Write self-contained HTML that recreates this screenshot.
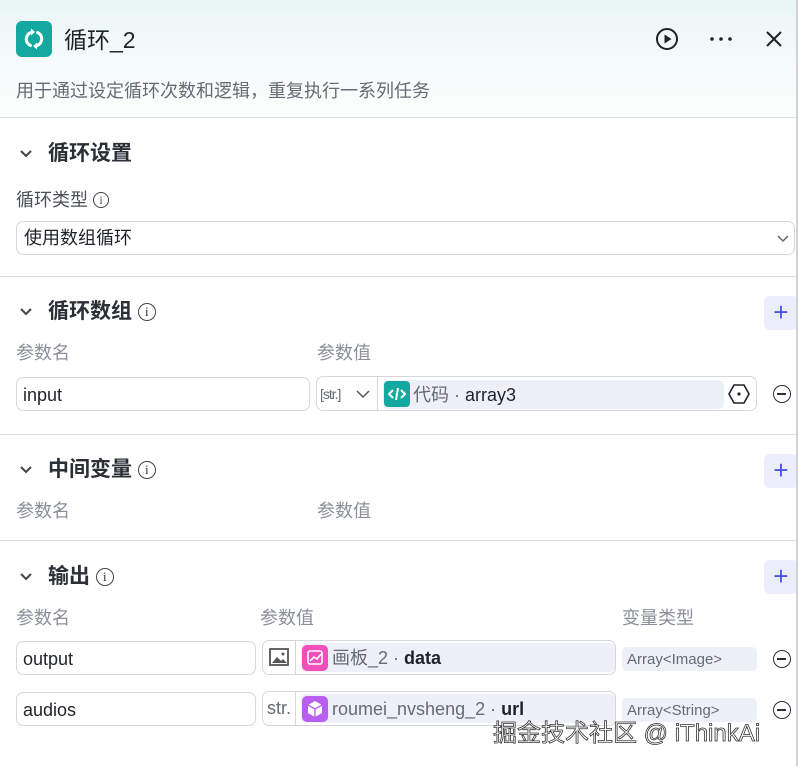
<!DOCTYPE html>
<html><head><meta charset="utf-8"><style>
*{box-sizing:border-box;margin:0;padding:0}
body{width:798px;height:766px;overflow:hidden;background:#fff;font-family:"Liberation Sans","Noto Sans CJK SC",sans-serif;color:#1f2329;position:relative}
.a{position:absolute;white-space:nowrap}
.hdr{left:0;top:0;width:798px;height:118px;background:linear-gradient(180deg,#e9f6f5 0%,#f7fbfb 60%,#fdfefe 100%)}
.hr{position:absolute;left:0;width:796px;height:1px;background:#dcdde1}
.sec{font-size:20px;font-weight:bold;color:#2b2f36;line-height:24px}
.lab{font-size:17px;color:#8a8f99;line-height:20px}
.box{position:absolute;border:1px solid #d5d7dc;border-radius:7px;background:#fff}
.plus{position:absolute;left:764px;width:34px;height:34px;background:#eceefc;border-radius:6px;color:#4d53e8;font-size:26px;line-height:32px;text-align:center}
.chip{position:absolute;background:#eef0f7;border-radius:5px}
.min{position:absolute;width:18px;height:18px;border:1.6px solid #2b2f36;border-radius:50%}
.min:after{content:"";position:absolute;left:3px;top:7px;width:9px;height:1.6px;background:#2b2f36}
.ic{position:absolute;width:22px;height:22px;border-radius:4px}
.t{font-size:18px;color:#1f2329;position:absolute;white-space:nowrap;line-height:20px}
.g{color:#666a73}
.inf{font-size:13px;font-weight:normal;border:1.4px solid #444;border-radius:50%;display:inline-block;width:18px;height:18px;line-height:16px;text-align:center;vertical-align:2px;font-family:"Liberation Serif",serif}
</style></head><body>
<div class="a hdr"></div>
<div class="a" style="left:16px;top:21px;width:36px;height:36px;background:#14a9a0;border-radius:6px">
<svg width="36" height="36" viewBox="0 0 36 36"><path d="M14.5 24.5A7 7 0 0 1 16 11.2M21.5 11.5A7 7 0 0 1 20 24.8" stroke="#fff" stroke-width="3" fill="none" stroke-linecap="round"/><path d="M15 7.5l4 3.5-4 3.5zM21 28.5l-4-3.5 4-3.5z" fill="#fff"/></svg></div>
<div class="a" style="left:64px;top:27px;font-size:23px;line-height:26px;color:#1f2329">循环_2</div>
<svg class="a" style="left:655px;top:27px" width="24" height="24" viewBox="0 0 24 24"><circle cx="12" cy="12" r="10" stroke="#1f2329" stroke-width="2" fill="none"/><path d="M9.5 7.5v9l7-4.5z" fill="#1f2329"/></svg>
<svg class="a" style="left:708px;top:35px" width="26" height="8"><circle cx="4" cy="4" r="1.8" fill="#1f2329"/><circle cx="13" cy="4" r="1.8" fill="#1f2329"/><circle cx="22" cy="4" r="1.8" fill="#1f2329"/></svg>
<svg class="a" style="left:765px;top:30px" width="18" height="18" viewBox="0 0 18 18"><path d="M2 2l14 14M16 2L2 16" stroke="#1f2329" stroke-width="2"/></svg>
<div class="a" style="left:16px;top:80px;font-size:18px;line-height:22px;color:#666a73">用于通过设定循环次数和逻辑，重复执行一系列任务</div>
<div class="hr" style="top:117px"></div>

<svg class="a" style="left:19px;top:149px" width="14" height="10" viewBox="0 0 14 10"><path d="M2 2l5 5 5-5" stroke="#444" stroke-width="2" fill="none"/></svg>
<div class="a sec" style="left:48px;top:142px;font-size:21px">循环设置</div>
<div class="a" style="left:16px;top:190px;font-size:18px;line-height:20px;color:#4a4f58">循环类型 <span class="inf" style="width:16px;height:16px;line-height:14px;font-size:12px">i</span></div>
<div class="box" style="left:16px;top:221px;width:779px;height:34px"></div>
<div class="t" style="left:24px;top:228px">使用数组循环</div>
<svg class="a" style="left:776px;top:234px" width="14" height="9"><path d="M2 2l5 5 5-5" stroke="#666" stroke-width="1.5" fill="none"/></svg>
<div class="hr" style="top:276px"></div>

<svg class="a" style="left:19px;top:307px" width="14" height="10" viewBox="0 0 14 10"><path d="M2 2l5 5 5-5" stroke="#444" stroke-width="2" fill="none"/></svg>
<div class="a sec" style="left:48px;top:300px;font-size:21px">循环数组 <span class="inf">i</span></div>
<div class="plus" style="top:296px">+</div>
<div class="a lab" style="left:16px;top:343px;font-size:18px">参数名</div>
<div class="a lab" style="left:317px;top:343px;font-size:18px">参数值</div>
<div class="box" style="left:16px;top:377px;width:294px;height:34px"></div>
<div class="t" style="left:23px;top:385px">input</div>
<div class="box" style="left:316px;top:376px;width:441px;height:35px"></div>
<div class="a" style="left:377px;top:377px;width:1px;height:33px;background:#d5d7dc"></div>
<div class="t g" style="left:320px;top:384px;font-size:14px;letter-spacing:-1px">[str.]</div>
<svg class="a" style="left:355px;top:389px" width="16" height="10"><path d="M2 2l6 6 6-6" stroke="#555" stroke-width="1.5" fill="none"/></svg>
<div class="chip" style="left:383px;top:380px;width:341px;height:29px"></div>
<div class="ic" style="left:384px;top:381px;width:26px;height:26px;background:#14a9a0"><svg width="26" height="26"><path d="M9 9l-4 4 4 4M17 9l4 4-4 4M14 7l-2 12" stroke="#fff" stroke-width="2" fill="none"/></svg></div>
<div class="t" style="left:413px;top:385px"><span class="g">代码 · </span>array3</div>
<svg class="a" style="left:728px;top:383px" width="22" height="22" viewBox="0 0 22 22"><path d="M6 2h10l5 9-5 9H6l-5-9z" stroke="#1f2329" stroke-width="1.6" fill="none"/><circle cx="11" cy="11" r="1.6" fill="#1f2329"/></svg>
<div class="min" style="left:773px;top:385px"></div>
<div class="hr" style="top:434px"></div>

<svg class="a" style="left:19px;top:465px" width="14" height="10" viewBox="0 0 14 10"><path d="M2 2l5 5 5-5" stroke="#444" stroke-width="2" fill="none"/></svg>
<div class="a sec" style="left:48px;top:458px;font-size:21px">中间变量 <span class="inf">i</span></div>
<div class="plus" style="top:454px">+</div>
<div class="a lab" style="left:16px;top:501px;font-size:18px">参数名</div>
<div class="a lab" style="left:317px;top:501px;font-size:18px">参数值</div>
<div class="hr" style="top:540px"></div>

<svg class="a" style="left:19px;top:572px" width="14" height="10" viewBox="0 0 14 10"><path d="M2 2l5 5 5-5" stroke="#444" stroke-width="2" fill="none"/></svg>
<div class="a sec" style="left:48px;top:565px;font-size:21px">输出 <span class="inf">i</span></div>
<div class="plus" style="top:560px">+</div>
<div class="a lab" style="left:16px;top:608px;font-size:18px">参数名</div>
<div class="a lab" style="left:260px;top:608px;font-size:18px">参数值</div>
<div class="a lab" style="left:622px;top:608px;font-size:18px">变量类型</div>

<div class="box" style="left:16px;top:641px;width:240px;height:34px"></div>
<div class="t" style="left:23px;top:649px">output</div>
<div class="box" style="left:262px;top:640px;width:354px;height:35px"></div>
<div class="a" style="left:295px;top:641px;width:1px;height:33px;background:#d5d7dc"></div>
<svg class="a" style="left:268px;top:647px" width="22" height="20"><rect x="2" y="2" width="18" height="16" stroke="#555" stroke-width="1.8" fill="none"/><path d="M4 16l5-6 4 4 2-2 4 4z" fill="#555"/><circle cx="15" cy="7" r="1.5" fill="#555"/></svg>
<div class="chip" style="left:301px;top:643px;width:314px;height:29px"></div>
<div class="ic" style="left:302px;top:645px;width:26px;height:26px;background:#f24fba;border-radius:5px"><svg width="26" height="26"><rect x="6" y="6" width="14" height="13" rx="2" stroke="#fff" stroke-width="1.6" fill="none"/><path d="M8 16l4-4 3 2 4-5" stroke="#fff" stroke-width="1.6" fill="none"/></svg></div>
<div class="t" style="left:332px;top:648px"><span class="g">画板_2 · </span><b>data</b></div>
<div class="chip" style="left:622px;top:647px;width:135px;height:24px"></div>
<div class="t g" style="left:627px;top:650px;font-size:15px">Array&lt;Image&gt;</div>
<div class="min" style="left:773px;top:650px"></div>

<div class="box" style="left:16px;top:692px;width:240px;height:34px"></div>
<div class="t" style="left:23px;top:700px">audios</div>
<div class="box" style="left:262px;top:691px;width:354px;height:35px"></div>
<div class="a" style="left:295px;top:692px;width:1px;height:33px;background:#d5d7dc"></div>
<div class="t g" style="left:267px;top:698px;font-size:18px">str.</div>
<div class="chip" style="left:301px;top:694px;width:314px;height:29px"></div>
<div class="ic" style="left:302px;top:696px;width:26px;height:26px;background:#b85ef0;border-radius:5px"><svg width="26" height="26"><path d="M13 5l7 4v8l-7 4-7-4V9z" fill="#fff"/><path d="M6 9l7 4 7-4M13 13v8" stroke="#b85ef0" stroke-width="1.4" fill="none"/></svg></div>
<div class="t" style="left:332px;top:699px"><span class="g">roumei_nvsheng_2 · </span><b>url</b></div>
<div class="chip" style="left:622px;top:698px;width:135px;height:24px"></div>
<div class="t g" style="left:627px;top:701px;font-size:15px">Array&lt;String&gt;</div>
<div class="min" style="left:773px;top:701px"></div>

<div class="a" style="left:493px;top:720px;font-size:24px;line-height:28px;color:#fff;-webkit-text-stroke:0.8px #333;white-space:nowrap">掘金技术社区 @ iThinkAi</div>
<div class="a" style="left:796px;top:0;width:2px;height:766px;background:#cfd3d6"></div>
</body></html>
